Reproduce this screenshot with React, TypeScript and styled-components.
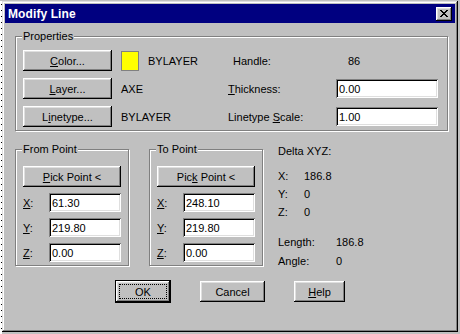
import styled, { createGlobalStyle } from "styled-components";

const GlobalStyle = createGlobalStyle`
  body {
    margin: 0;
    background: #c0c0c0;
    font-family: "Liberation Sans", Arial, sans-serif;
    font-size: 11px;
    color: #000;
  }
`;

const Page = styled.div`
  display: flex;
  height: 334px;
  padding-top: 1px;
  box-sizing: border-box;
`;

const DotStrip = styled.div`
  width: 2px;
  background-color: #fff;
  background-image: repeating-linear-gradient(to bottom, #000 0 1px, transparent 1px 6px);
  background-size: 1px 100%;
  background-position: 1px 3px;
  background-repeat: no-repeat;
`;

const Dialog = styled.div`
  width: 456px;
  height: 331px;
  padding: 3px;
  box-sizing: border-box;
  background: #c0c0c0;
  box-shadow: inset -1px -1px #000, inset 1px 1px #dfdfdf, inset -2px -2px #808080,
    inset 2px 2px #fff;
  display: flex;
  flex-direction: column;
`;

const TitleBar = styled.div`
  height: 19px;
  background: #000080;
  color: #fff;
  display: flex;
  align-items: center;
  justify-content: space-between;
  padding: 0 3px 0 3px;
`;

const TitleText = styled.span`
  font-weight: bold;
  font-size: 12px;
  letter-spacing: 0.1px;
`;

const CloseButton = styled.div`
  width: 16px;
  height: 14px;
  background: #c0c0c0;
  box-shadow: inset -1px -1px #000, inset 1px 1px #fff, inset -2px -2px #808080,
    inset 2px 2px #dfdfdf;
  display: flex;
  align-items: center;
  justify-content: center;
`;

const Body = styled.div`
  padding: 7px 7px 0 10px;
  display: flex;
  flex-direction: column;
`;

const Group = styled.fieldset<{ $w?: number; $pt: number }>`
  margin: 0;
  width: ${(p) => (p.$w ? `${p.$w}px` : "auto")};
  box-sizing: border-box;
  border: 1px solid #808080;
  box-shadow: 1px 1px 0 #fff, inset 1px 1px 0 #fff;
  padding: ${(p) => p.$pt}px 7px 3px 7px;
  min-width: 0;
`;

const Legend = styled.legend`
  padding: 0 1px;
  margin-left: -1px;
  line-height: 13px;
  background: #c0c0c0;
`;

const PropRow = styled.div`
  display: flex;
  align-items: center;
  height: 21px;
  & + & {
    margin-top: 7px;
  }
`;

const PropLeft = styled.div`
  width: 205px;
  display: flex;
  align-items: center;
`;

const Button = styled.div<{ $w: number; $default?: boolean }>`
  width: ${(p) => p.$w}px;
  height: 21px;
  box-sizing: border-box;
  background: #c0c0c0;
  box-shadow: inset -1px -1px #000, inset 1px 1px #fff, inset -2px -2px #808080,
    inset 2px 2px #dfdfdf;
  display: flex;
  align-items: center;
  justify-content: center;
  border: ${(p) => (p.$default ? "1px solid #000" : "none")};
  height: ${(p) => (p.$default ? 23 : 21)}px;
  width: ${(p) => p.$w + (p.$default ? 2 : 0)}px;
  flex-shrink: 0;
`;

const FocusRing = styled.span`
  outline: 1px dotted #000;
  outline-offset: 0;
  width: 46px;
  height: 13px;
  display: flex;
  align-items: center;
  justify-content: center;
`;

const Swatch = styled.div`
  width: 18px;
  height: 20px;
  box-sizing: border-box;
  background: #ffff00;
  border: 1px solid #808080;
  margin-left: 9px;
`;

const ValueText = styled.span<{ $ml: number }>`
  margin-left: ${(p) => p.$ml}px;
`;

const FieldLabel = styled.span<{ $w: number; $pl?: number }>`
  width: ${(p) => p.$w}px;
  padding-left: ${(p) => p.$pl ?? 0}px;
  box-sizing: border-box;
  flex-shrink: 0;
`;

const TextField = styled.div<{ $w: number }>`
  width: ${(p) => p.$w}px;
  height: 19px;
  box-sizing: border-box;
  background: #fff;
  box-shadow: inset 1px 1px #808080, inset -1px -1px #fff, inset 2px 2px #000,
    inset -2px -2px #dfdfdf;
  display: flex;
  align-items: center;
  padding: 1px 3px 0 3px;
`;

const PointsRow = styled.div`
  display: flex;
  align-items: flex-start;
  margin-top: 12px;
`;

const Gap = styled.div<{ $w: number }>`
  width: ${(p) => p.$w}px;
  flex-shrink: 0;
`;

const PointField = styled.div`
  display: flex;
  align-items: center;
  height: 19px;
  margin-top: 6px;
  &:first-of-type {
    margin-top: 8px;
  }
`;

const DeltaColumn = styled.div`
  margin-top: 2px;
  display: flex;
  flex-direction: column;
`;

const DeltaTitle = styled.div`
  line-height: 13px;
  margin-bottom: 9px;
`;

const DeltaRow = styled.div<{ $mt?: number }>`
  display: flex;
  line-height: 18px;
  margin-top: ${(p) => p.$mt ?? 0}px;
`;

const ButtonRow = styled.div`
  display: flex;
  justify-content: center;
  align-items: center;
  gap: 29px;
  margin-top: 10px;
  padding-right: 3px;
`;

function CloseGlyph() {
  return (
    <svg width="8" height="7" viewBox="0 0 8 7" shapeRendering="crispEdges">
      <path
        d="M0 0h2v1h-2zM6 0h2v1h-2zM1 1h2v1h-2zM5 1h2v1h-2zM2 2h4v1h-4zM3 3h2v1h-2zM2 4h4v1h-4zM1 5h2v1h-2zM5 5h2v1h-2zM0 6h2v1h-2zM6 6h2v1h-2z"
        fill="#000"
      />
    </svg>
  );
}

function PointGroup({ title, pick, x, y, z }: { title: string; pick: React.ReactNode; x: string; y: string; z: string }) {
  return (
    <Group $w={114} $pt={10}>
      <Legend>{title}</Legend>
      <Button $w={98}>{pick}</Button>
      <PointField>
        <FieldLabel $w={26}>
          <u>X</u>:
        </FieldLabel>
        <TextField $w={72}>{x}</TextField>
      </PointField>
      <PointField>
        <FieldLabel $w={26}>
          <u>Y</u>:
        </FieldLabel>
        <TextField $w={72}>{y}</TextField>
      </PointField>
      <PointField>
        <FieldLabel $w={26}>
          <u>Z</u>:
        </FieldLabel>
        <TextField $w={72}>{z}</TextField>
      </PointField>
    </Group>
  );
}

export default function App() {
  return (
    <>
      <GlobalStyle />
      <Page>
        <DotStrip />
        <Dialog>
          <TitleBar>
            <TitleText>Modify Line</TitleText>
            <CloseButton>
              <CloseGlyph />
            </CloseButton>
          </TitleBar>
          <Body>
            <Group $pt={7}>
              <Legend>Properties</Legend>
              <PropRow>
                <PropLeft>
                  <Button $w={89}>
                    <span>
                      <u>C</u>olor...
                    </span>
                  </Button>
                  <Swatch />
                  <ValueText $ml={9}>BYLAYER</ValueText>
                </PropLeft>
                <FieldLabel $w={108} $pl={5}>
                  Handle:
                </FieldLabel>
                <ValueText $ml={12}>86</ValueText>
              </PropRow>
              <PropRow>
                <PropLeft>
                  <Button $w={89}>
                    <span>
                      <u>L</u>ayer...
                    </span>
                  </Button>
                  <ValueText $ml={9}>AXE</ValueText>
                </PropLeft>
                <FieldLabel $w={108}>
                  <u>T</u>hickness:
                </FieldLabel>
                <TextField $w={102}>0.00</TextField>
              </PropRow>
              <PropRow>
                <PropLeft>
                  <Button $w={89}>
                    <span>
                      L<u>i</u>netype...
                    </span>
                  </Button>
                  <ValueText $ml={9}>BYLAYER</ValueText>
                </PropLeft>
                <FieldLabel $w={108}>
                  Linetype <u>S</u>cale:
                </FieldLabel>
                <TextField $w={102}>1.00</TextField>
              </PropRow>
            </Group>

            <PointsRow>
              <PointGroup
                title="From Point"
                pick={
                  <span>
                    <u>P</u>ick Point &lt;
                  </span>
                }
                x="61.30"
                y="219.80"
                z="0.00"
              />
              <Gap $w={20} />
              <PointGroup
                title="To Point"
                pick={
                  <span>
                    Pic<u>k</u> Point &lt;
                  </span>
                }
                x="248.10"
                y="219.80"
                z="0.00"
              />
              <Gap $w={15} />
              <DeltaColumn>
                <DeltaTitle>Delta XYZ:</DeltaTitle>
                <DeltaRow>
                  <FieldLabel $w={26}>X:</FieldLabel>
                  <span>186.8</span>
                </DeltaRow>
                <DeltaRow>
                  <FieldLabel $w={26}>Y:</FieldLabel>
                  <span>0</span>
                </DeltaRow>
                <DeltaRow>
                  <FieldLabel $w={26}>Z:</FieldLabel>
                  <span>0</span>
                </DeltaRow>
                <DeltaRow $mt={12}>
                  <FieldLabel $w={58}>Length:</FieldLabel>
                  <span>186.8</span>
                </DeltaRow>
                <DeltaRow $mt={1}>
                  <FieldLabel $w={58}>Angle:</FieldLabel>
                  <span>0</span>
                </DeltaRow>
              </DeltaColumn>
            </PointsRow>

            <ButtonRow>
              <Button $w={54} $default>
                <FocusRing>OK</FocusRing>
              </Button>
              <Button $w={65}>Cancel</Button>
              <Button $w={51}>
                <span>
                  <u>H</u>elp
                </span>
              </Button>
            </ButtonRow>
          </Body>
        </Dialog>
      </Page>
    </>
  );
}
